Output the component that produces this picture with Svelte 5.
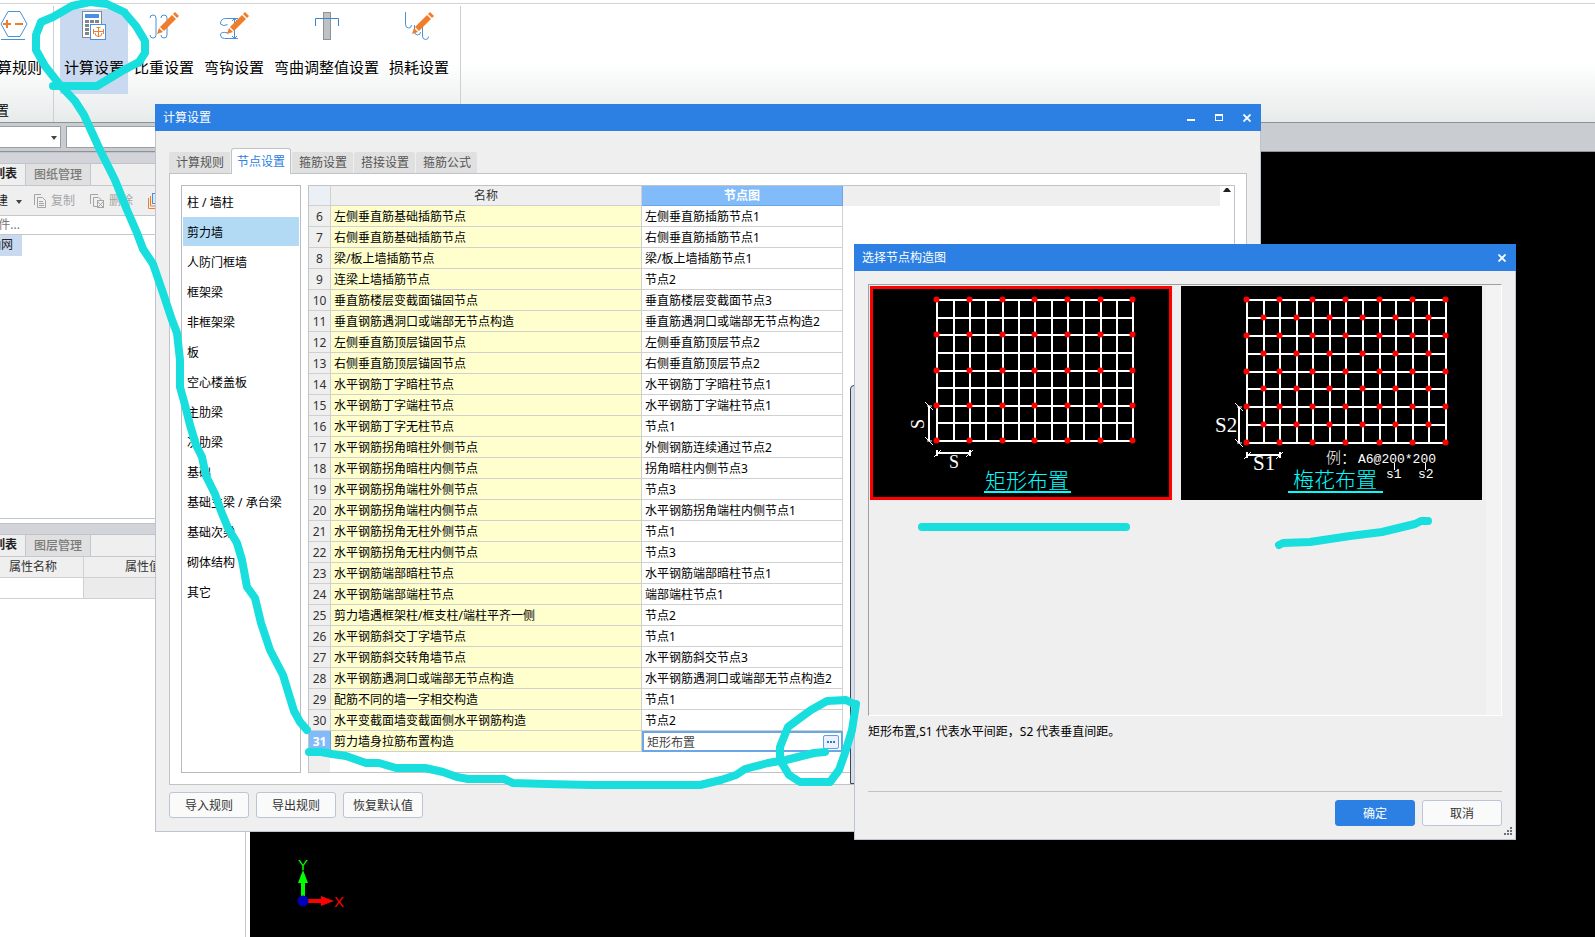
<script>
    const tools = [
        { icon: 'calc', label: '计算设置' },
        { icon: 'weight', label: '比重设置' },
        { icon: 'hook', label: '弯钩设置' },
        { icon: 'bend', label: '弯曲调整值设置' },
        { icon: 'loss', label: '损耗设置' }
    ];

    const tabs = ['计算规则', '节点设置', '箍筋设置', '搭接设置', '箍筋公式'];

    const categories = [
        '柱 / 墙柱', '剪力墙', '人防门框墙', '框架梁', '非框架梁', '板', '空心楼盖板',
        '主肋梁', '次肋梁', '基础', '基础主梁 / 承台梁', '基础次梁', '砌体结构', '其它'
    ];

    const rows = [
        ['左侧垂直筋基础插筋节点', '左侧垂直筋插筋节点1'],
        ['右侧垂直筋基础插筋节点', '右侧垂直筋插筋节点1'],
        ['梁/板上墙插筋节点', '梁/板上墙插筋节点1'],
        ['连梁上墙插筋节点', '节点2'],
        ['垂直筋楼层变截面锚固节点', '垂直筋楼层变截面节点3'],
        ['垂直钢筋遇洞口或端部无节点构造', '垂直筋遇洞口或端部无节点构造2'],
        ['左侧垂直筋顶层锚固节点', '左侧垂直筋顶层节点2'],
        ['右侧垂直筋顶层锚固节点', '右侧垂直筋顶层节点2'],
        ['水平钢筋丁字暗柱节点', '水平钢筋丁字暗柱节点1'],
        ['水平钢筋丁字端柱节点', '水平钢筋丁字端柱节点1'],
        ['水平钢筋丁字无柱节点', '节点1'],
        ['水平钢筋拐角暗柱外侧节点', '外侧钢筋连续通过节点2'],
        ['水平钢筋拐角暗柱内侧节点', '拐角暗柱内侧节点3'],
        ['水平钢筋拐角端柱外侧节点', '节点3'],
        ['水平钢筋拐角端柱内侧节点', '水平钢筋拐角端柱内侧节点1'],
        ['水平钢筋拐角无柱外侧节点', '节点1'],
        ['水平钢筋拐角无柱内侧节点', '节点3'],
        ['水平钢筋端部暗柱节点', '水平钢筋端部暗柱节点1'],
        ['水平钢筋端部端柱节点', '端部端柱节点1'],
        ['剪力墙遇框架柱/框支柱/端柱平齐一侧', '节点2'],
        ['水平钢筋斜交丁字墙节点', '节点1'],
        ['水平钢筋斜交转角墙节点', '水平钢筋斜交节点3'],
        ['水平钢筋遇洞口或端部无节点构造', '水平钢筋遇洞口或端部无节点构造2'],
        ['配筋不同的墙一字相交构造', '节点1'],
        ['水平变截面墙变截面侧水平钢筋构造', '节点2'],
        ['剪力墙身拉筋布置构造', '矩形布置']
    ];
    const firstRow = 6;
    const editRow = 31;

    // grid line positions inside the two layout diagrams
    const rectX = [67, 84, 100, 116, 133, 149, 165, 182, 198, 214, 231, 247, 263];
    const rectY = [14, 32, 49, 67, 85, 102, 120, 137, 155];
    const plumX = [66, 83, 99, 116, 132, 149, 165, 182, 199, 215, 232, 248, 265];
    const plumY = [14, 32, 50, 68, 86, 103, 121, 139, 157];

    let tab = $state('节点设置');
    let category = $state('剪力墙');
    let layout = $state('rect');
    let nodeValue = $state('矩形布置');
</script>

{#snippet pencil()}
    <g transform="translate(9 24)" fill="#f07d2b">
        <path d="M3 -6 L15 -18 L19 -14 L7 -2 Z" />
        <path d="M16 -19 L18 -21 L22 -17 L20 -15 Z" />
        <path d="M2 -5 L0 1 L6 -1 Z" />
    </g>
{/snippet}

{#snippet closeIcon()}
    <svg width="8" height="8" viewBox="0 0 8 8"><path d="M0.5 0.5 L7.5 7.5 M7.5 0.5 L0.5 7.5" stroke="#fff" stroke-width="1.8" /></svg>
{/snippet}

{#snippet mesh(xs, ys, plum)}
    {#each xs as x}
        <path d="M{x} {ys[0]} V{ys[8]}" stroke="#fff" stroke-width="2" />
    {/each}
    {#each ys as y}
        <path d="M{xs[0] - 1} {y} H{xs[12] + 1}" stroke="#fff" stroke-width="2" />
    {/each}
    {#each xs as x, i}
        {#each ys as y, j}
            {#if (i % 2 === 0 && j % 2 === 0) || (plum && i % 2 === 1 && j % 2 === 1)}
                <circle cx={x - 0.5} cy={y - 0.5} r="3" fill="#f00" />
            {/if}
        {/each}
    {/each}
    <path d="M{xs[0] - 8} {ys[6]} V{ys[8]}" stroke="#fff" stroke-width="2" />
    <path d="M{xs[0] - 12} {ys[6] - 4} l8 8 M{xs[0] - 12} {ys[8] - 4} l8 8 M{xs[0] - 10} {ys[6]} h5 M{xs[0] - 10} {ys[8]} h5" stroke="#fff" />
    <path d="M{xs[0]} {ys[8] + 12} H{xs[2]} M{xs[0]} {ys[8] + 9} v6 M{xs[2]} {ys[8] + 9} v6" stroke="#fff" stroke-width="2" />
    <path d="M{xs[0] - 3} {ys[8] + 16} l7 -7 M{xs[2] - 4} {ys[8] + 16} l7 -7" stroke="#fff" />
{/snippet}

<div class="app">
    <header class="ribbon">
        <div class="group first">
            <button class="tool cut">
                <svg width="28" height="32" viewBox="0 0 28 32" fill="none">
                    <path d="M1 15 L8 2.5 H20 L27 15 L20 27.5 H8 Z" stroke="#4a90d9" />
                    <path d="M1 30.5 H25" stroke="#4a90d9" />
                    <path d="M3 15 H11 M7 11 V19 M15 15 H23" stroke="#f07d2b" stroke-width="2" />
                </svg>
                <span>算规则</span>
            </button>
            <span class="group-name">置</span>
        </div>
        <div class="group">
            {#each tools as tool, i}
                <button class="tool" class:active={i === 0}>
                    <svg width="32" height="32" viewBox="0 0 32 32" fill="none">
                        {#if tool.icon === 'calc'}
                            <rect x="4.5" y="2.5" width="19" height="26" fill="#fff" stroke="#808a94" />
                            <rect x="7" y="5" width="14" height="4" fill="#4a90e2" />
                            <path d="M7 12.5 H21 M7 16.5 H15 M7 20.5 H11 M7 24.5 H11" stroke="#7d8790" stroke-width="3" stroke-dasharray="4 1" />
                            <rect x="12.5" y="15.5" width="15" height="15" fill="#fff" stroke="#4a90e2" />
                            <path d="M20.5 18 V28 M18.5 18.5 H22.5 M16 22.5 H25 M15.5 20 V25 M25.5 20 V25 M17 24 q0 3.500 3.500 3.500 q3.500 0 3.500 -3.500" stroke="#f07d2b" />
                        {:else if tool.icon === 'weight'}
                            <path d="M2 9 q0 -3 3 -3 q3 0 3 3 v17 q0 3 -3 3 q-3 0 -3 -3 M13 9 q0 -3 3 -3 q3 0 3 3 v17 q0 3 -3 3 q-3 0 -3 -3" stroke="#4a90d9" />
                            {@render pencil()}
                        {:else if tool.icon === 'hook'}
                            <path d="M2.500 15 q0 -5.500 5 -5.500 H20 M2.500 15 q3 3 7 0.500 M10 24 q-7.500 -2 -7.500 2 q0 3.500 4 3.500 H20 M16.500 10 v19 M14 12 l2.500 -2.500 l2.500 2.500 M14 27 l2.500 2.500 l2.500 -2.500" stroke="#4a90d9" />
                            {@render pencil()}
                        {:else if tool.icon === 'bend'}
                            <rect x="12.5" y="3.5" width="7" height="27" fill="#bfc2c5" stroke="#8d9297" />
                            <path d="M4.5 17 V9.5 H27.5 V17" stroke="#3a84d0" />
                        {:else}
                            <path d="M2.500 3 v12 q0 4 3 4 q3 0 3 -3 M11.500 16 v6 q0 4 3 4 q3 0 3 -3 M19.500 18 v9 q0 3.500 3 3.500 q3 0 3 -3" stroke="#4a90d9" />
                            {@render pencil()}
                        {/if}
                    </svg>
                    <span>{tool.label}</span>
                </button>
            {/each}
        </div>
    </header>

    <div class="filters">
        <div class="combo">
            <select aria-label="楼层"><option></option></select>
            <svg width="6" height="4" viewBox="0 0 6 4"><path d="M0 0 H6 L3 4 Z" fill="#444" /></svg>
        </div>
        <input class="filter-input" aria-label="构件" />
    </div>

    <div class="workspace">
        <aside class="sidebar">
            <section class="panel tree-panel">
                <div class="strip"></div>
                <div class="side-tabs">
                    <button class="side-tab cut on">列表</button>
                    <button class="side-tab">图纸管理</button>
                </div>
                <div class="side-tools">
                    <button class="new cut">建</button>
                    <svg class="drop" width="6" height="4" viewBox="0 0 6 4"><path d="M0 0 H6 L3 4 Z" fill="#444" /></svg>
                    <button class="copy">
                        <svg width="12" height="14" viewBox="0 0 12 14" fill="none" stroke="#a5a5a5">
                            <path d="M0.5 11 V0.5 H7" /><path d="M3.5 3.5 H8.5 L11.5 6.5 V13.5 H3.5 Z M5 7.5 H9 M5 9.5 H10 M5 11.5 H10" />
                        </svg>
                        复制
                    </button>
                    <button class="remove">
                        <svg width="14" height="14" viewBox="0 0 14 14" fill="none" stroke="#a5a5a5">
                            <path d="M0.5 10 V0.5 H8" /><path d="M7 12.5 H3.5 V3.5 H8.5 L11.5 6" /><rect x="7.5" y="6.5" width="6" height="7" /><path d="M8 8 L13 13 M13 8 L8 13" />
                        </svg>
                        删除
                    </button>
                    <svg width="14" height="16" viewBox="0 0 14 16" fill="none"><path d="M0.5 5 V15.5 H12" stroke="#f07d2b" /><path d="M2.5 3 V13 H12" stroke="#f07d2b" /><rect x="4.5" y="0.5" width="9" height="10" fill="#dbe9fa" stroke="#4a90e2" /></svg>
                </div>
                <div class="search"><span class="cut">件...</span></div>
                <div class="tree"><button class="node cut">轴网</button></div>
            </section>
            <section class="panel lower">
                <div class="strip"></div>
                <div class="side-tabs">
                    <button class="side-tab cut on">列表</button>
                    <button class="side-tab">图层管理</button>
                </div>
                <table class="props">
                    <thead><tr><th class="prop-name">属性名称</th><th class="prop-value">属性值</th><th></th></tr></thead>
                    <tbody><tr><td></td><td class="off"></td><td class="off"></td></tr></tbody>
                </table>
            </section>
        </aside>
        <main class="canvas">
            <svg width="60" height="60" viewBox="0 0 60 60">
                <path d="M13 44 V27" stroke="#0f0" stroke-width="4" />
                <path d="M8 28 L13 15 L18 28 Z" fill="#0f0" />
                <path d="M14 46 H33" stroke="#f00" stroke-width="4" />
                <path d="M31 41 L44 46 L31 51 Z" fill="#f00" />
                <circle cx="13" cy="46" r="5.5" fill="#0000b8" />
                <text x="13" y="15" class="axis" text-anchor="middle" fill="#0f0">Y</text>
                <text x="49" y="52" class="axis" text-anchor="middle" fill="#f00">X</text>
            </svg>
        </main>
    </div>

    <div class="window settings" role="dialog" aria-label="计算设置">
        <div class="titlebar">
            <span>计算设置</span>
            <div class="win-buttons">
                <button aria-label="最小化"><svg width="8" height="8" viewBox="0 0 8 8"><rect y="5" width="8" height="2" fill="#fff" /></svg></button>
                <button aria-label="最大化"><svg width="8" height="8" viewBox="0 0 8 8"><path d="M0 0 H8 V7 H0 Z M1 2 V6 H7 V2 Z" fill="#fff" fill-rule="evenodd" /></svg></button>
                <button aria-label="关闭">{@render closeIcon()}</button>
            </div>
        </div>
        <div class="settings-body">
            <div class="tabs" role="tablist">
                {#each tabs as name}
                    <button class="tab" role="tab" aria-selected={tab === name} class:current={tab === name} onclick={() => (tab = name)}>{name}</button>
                {/each}
            </div>
            <div class="pane">
                <div class="categories">
                    {#each categories as name}
                        <button class="category" class:selected={category === name} onclick={() => (category = name)}>{name}</button>
                    {/each}
                </div>
                <div class="grid-box">
                    <div class="grid-scroll">
                        <table class="grid">
                            <thead>
                                <tr>
                                    <th class="num corner"></th>
                                    <th class="name">名称</th>
                                    <th class="value chosen">节点图</th>
                                    <th class="rest"></th>
                                </tr>
                            </thead>
                            <tbody>
                                {#each rows as [name, value], i}
                                    {@const no = firstRow + i}
                                    <tr>
                                        <th class="num" class:chosen={no === editRow}>{no}</th>
                                        <td class="name">{name}</td>
                                        {#if no === editRow}
                                            <td class="value editing">
                                                <div class="editor">
                                                    <input aria-label="节点图" bind:value={nodeValue} />
                                                    <button aria-label="选择">
                                                        <svg width="14" height="12" viewBox="0 0 14 12"><path d="M3 6 h2 M6 6 h2 M9 6 h2" stroke="#3278c8" stroke-width="2" /></svg>
                                                    </button>
                                                </div>
                                            </td>
                                        {:else}
                                            <td class="value">{value}</td>
                                        {/if}
                                    </tr>
                                {/each}
                            </tbody>
                        </table>
                    </div>
                    <div class="scrollbar">
                        <svg width="8" height="4" viewBox="0 0 8 4"><path d="M0 4 H8 L5 0 H3 Z" fill="#222" /></svg>
                    </div>
                </div>
                <div class="preview"></div>
            </div>
            <div class="actions">
                <button class="btn">导入规则</button>
                <button class="btn">导出规则</button>
                <button class="btn">恢复默认值</button>
            </div>
        </div>
    </div>

    <div class="window chooser" role="dialog" aria-label="选择节点构造图">
        <div class="titlebar">
            <span>选择节点构造图</span>
            <div class="win-buttons">
                <button aria-label="关闭">{@render closeIcon()}</button>
            </div>
        </div>
        <div class="chooser-body">
            <div class="gallery">
                <button class="card" class:picked={layout === 'rect'} onclick={() => (layout = 'rect')}>
                    <svg width="302" height="214" viewBox="0 0 302 214">
                        {@render mesh(rectX, rectY, false)}
                        <text class="dim" x="84" y="182" text-anchor="middle">S</text>
                        <text class="dim" transform="translate(54 138) rotate(-90)" text-anchor="middle">S</text>
                        <text class="caption" x="115" y="202">矩形布置</text>
                        <path d="M114 206 H201" stroke="#0ff" stroke-width="2" />
                    </svg>
                </button>
                <button class="card" class:picked={layout === 'plum'} onclick={() => (layout = 'plum')}>
                    <svg width="301" height="214" viewBox="0 0 301 214">
                        {@render mesh(plumX, plumY, true)}
                        <text class="dim large" x="34" y="146">S2</text>
                        <text class="dim large" x="72" y="184">S1</text>
                        <text class="sample" x="145" y="177">例：</text>
                        <text class="note" x="177" y="177">A6@200*200</text>
                        <text class="note" x="205" y="192">s1</text>
                        <text class="note" x="237" y="192">s2</text>
                        <path d="M213.5 177 V184 M244.5 177 V184" stroke="#fff" />
                        <text class="caption" x="112" y="201">梅花布置</text>
                        <path d="M107 206 H202" stroke="#0ff" stroke-width="2" />
                    </svg>
                </button>
            </div>
            <p class="hint">矩形布置,S1 代表水平间距，S2 代表垂直间距。</p>
            <div class="chooser-actions">
                <button class="btn primary">确定</button>
                <button class="btn">取消</button>
            </div>
            <svg class="grip" width="8" height="8" viewBox="0 0 8 8"><path d="M6 1 h2 M3 4 h2 M6 4 h2 M0 7 h2 M3 7 h2 M6 7 h2" stroke="#6b6f78" stroke-width="2" /></svg>
        </div>
    </div>

    <svg class="marker" width="1595" height="937" viewBox="0 0 1595 937" aria-hidden="true">
        <path d="M53 86 H97 L122 71 L139 62 L145 53 V41 L136 26 L124 12 L107 4 L90 2 L72 6 L53 17 L41 22 L36 35 V50 L45 66 L60 85 L75 101 L84 115 L100 150 L115 180 L127 210 L137 233 L143 249 L153 264 L163 293 L172 320 L177 333 L180 360 V387 L185 405 L190 425 L196 445 L202 457 L206 476 L215 494 L221 511 L228 528 L237 543 L242 560 L247 587 L255 598 L261 623 L270 650 L283 675 L290 698 L294 711 L300 722 L307 730" />
        <path d="M309 752 H321 L332 754 L346 756 L366 763 H379 L396 768 H425 L443 772 L457 777 L468 779 H504 L513 783 L546 784 L591 785 H700 L721 780 L736 775 L745 769 L768 763 L786 760 L814 753 L825 752" />
        <path d="M856 704 L852 730 L845 753 L839 770 L830 782 H800 L789 775 L780 760 V747 L788 727 L800 718 L811 710 L827 701 L846 700 L854 704" />
        <path d="M922 527 H1126" />
        <path d="M1279 545 L1283 543 L1310 542 L1350 536 L1382 532 L1415 524 L1421 521 H1428" />
    </svg>
</div>

<style>
    :global(body) { margin: 0; overflow: hidden; }

    .app {
        position: relative;
        display: flex;
        flex-direction: column;
        height: 100vh;
        overflow: hidden;
        background: #fff;
        color: #000;
        font: 12px/20px "Noto Sans", "Noto Sans CJK SC", sans-serif;
    }
    button, input, select {
        font: inherit;
        color: inherit;
        margin: 0;
        padding: 0;
        border: 0;
        background: none;
        box-sizing: border-box;
        border-radius: 0;
        outline: 0;
    }
    button { white-space: nowrap; }
    svg { display: block; flex: none; }
    .cut { display: flex; justify-content: flex-end; overflow: hidden; }

    /* ribbon */
    .ribbon {
        display: flex;
        height: 119px;
        box-sizing: border-box;
        border-top: 1px solid #d4d4d4;
        margin-top: 3px;
        background: linear-gradient(#fff 50%, #e6ebea);
    }
    .group {
        display: flex;
        align-items: flex-start;
        gap: 2px;
        padding: 3px 7px 0 6px;
        margin: 2px 0 0;
        border-right: 1px solid #ccd0d2;
    }
    .group.first { flex-direction: column; width: 54px; box-sizing: border-box; padding: 3px 0 0; }
    .tool {
        display: flex;
        flex-direction: column;
        align-items: center;
        gap: 14px;
        height: 85px;
        padding: 0 4px;
        font-size: 15px;
        line-height: 24px;
    }
    .tool.active { background: #c9d9f0; }
    .tool.cut { width: 46px; align-items: flex-end; justify-content: flex-start; }
    .tool.cut svg { margin-right: 14px; }
    .group-name { font-size: 13px; line-height: 20px; margin: 4px 0 0 -4px; }

    .filters {
        display: flex;
        gap: 5px;
        height: 30px;
        box-sizing: border-box;
        padding: 3px 0;
        border-top: 1px solid #8d9297;
        border-bottom: 1px solid #8d9297;
        background: #c9ccd1;
    }
    .combo { position: relative; width: 61px; }
    .combo select { width: 100%; height: 22px; appearance: none; background: #fff; border: 1px solid #9b9fa3; border-left: 0; }
    .combo svg { position: absolute; right: 4px; top: 10px; }
    .filter-input { width: 180px; height: 22px; background: #fff; border: 1px solid #9b9fa3; }

    /* left side */
    .workspace { flex: 1; display: flex; min-height: 0; }
    .sidebar { display: flex; flex-direction: column; gap: 4px; width: 246px; padding-right: 4px; background: #fff; color: #333; }
    .panel { border-right: 1px solid #c4c7cc; }
    .panel.lower { flex: 1; }
    .tree-panel { height: 367px; border-bottom: 1px solid #c4c7cc; box-sizing: border-box; }
    .strip { height: 12px; box-sizing: border-box; background: #d2d4da; border: solid #c0c4ca; border-width: 1px 0; }
    .side-tabs { display: flex; height: 21px; background: #efefef; border-bottom: 1px solid #c4c7cc; }
    .side-tab { padding: 0 8px; border-right: 1px solid #c4c7cc; background: #e0e0e0; color: #7a7a7a; font-weight: 500; }
    .side-tab.on { width: 26px; background: #efefef; color: #222; font-weight: 700; }
    .side-tools { display: flex; align-items: center; height: 30px; box-sizing: border-box; background: #efefef; border-bottom: 1px solid #c4c7cc; color: #a5a5a5; }
    .side-tools .new { width: 8px; color: #222; }
    .side-tools .drop { margin: 2px 12px 0 8px; }
    .copy, .remove { display: flex; align-items: center; gap: 5px; margin-right: 15px; }
    .search { height: 19px; line-height: 18px; box-sizing: border-box; border-bottom: 1px solid #c4c7cc; color: #777; }
    .search .cut { width: 20px; }
    .node { width: 22px; height: 21px; padding-right: 9px; background: #c9d9f0; color: #222; }
    .props { width: 100%; border-collapse: collapse; table-layout: fixed; }
    .props th { height: 20px; padding: 0; font-weight: 400; background: #efefef; border: solid #d0d0d0; border-width: 0 1px 1px 0; }
    .props td { height: 20px; padding: 0; border: solid #d0d0d0; border-width: 0 1px 1px 0; }
    .props .off { background: #ebebeb; }
    .props .prop-name { width: 74px; text-align: left; padding-left: 9px; }
    .props .prop-value { width: 118px; }

    .canvas { flex: 1; display: flex; align-items: flex-end; padding: 0 0 22px 40px; background: #000; }
    .axis { font: 15px "Liberation Sans", sans-serif; }

    /* windows */
    .window {
        position: absolute;
        display: flex;
        flex-direction: column;
        background: #efefef;
        box-sizing: border-box;
    }
    .settings { left: 155px; right: 334px; top: 104px; bottom: 105px; }
    .chooser { left: 854px; right: 79px; top: 244px; bottom: 97px; }
    .titlebar { display: flex; justify-content: space-between; align-items: center; height: 27px; padding: 0 10px 0 8px; background: #2c80e3; color: #fff; }
    .win-buttons { display: flex; gap: 20px; }
    .settings-body, .chooser-body { flex: 1; display: flex; flex-direction: column; border: 1px solid #bcc4d2; border-top: 0; min-height: 0; }
    .settings-body { padding: 17px 13px 13px; }

    .tabs { display: flex; align-items: flex-end; gap: 1px; height: 26px; margin-bottom: -1px; z-index: 1; }
    .tab { height: 22px; padding: 1px 6px 0 7px; background: #e0e0e0; color: #555; border-radius: 2px 2px 0 0; border-bottom: 1px solid #c0c4c9; }
    .tab.current { height: 26px; padding: 0 5px; background: #fff; color: #2c80e3; border: 1px solid #c0c4c9; border-bottom: 0; border-radius: 3px 3px 0 0; }
    .pane { flex: 1; display: flex; gap: 7px; padding: 11px; background: #fff; border: 1px solid #c0c4c9; position: relative; min-height: 0; }
    .categories { width: 120px; box-sizing: border-box; padding: 1px; border: 1px solid #b8bcc2; }
    .category { display: block; width: 100%; height: 30px; padding: 2px 0 0 4px; text-align: left; border-bottom: 1px solid #fff; }
    .category.selected { background: #b3daf5; }

    .grid-box { flex: 1; display: flex; border: 1px solid #c0c4c9; min-width: 0; }
    .grid-scroll { flex: 1; overflow: hidden; background: linear-gradient(to right, #efefef 21px, #fff 21px); }
    .grid { width: 100%; border-collapse: separate; border-spacing: 0; table-layout: fixed; }
    .grid th, .grid td { height: 21px; box-sizing: border-box; padding: 1px 3px 0; line-height: 19px; border: solid #d0d0d0; border-width: 0 1px 1px 0; white-space: nowrap; }
    .grid th { font-weight: 400; color: #333; background: #efefef; }
    .grid thead th { height: 20px; line-height: 18px; }
    .grid .num { width: 22px; padding: 1px 0 0; }
    .grid .corner { background: #ebf0f7; }
    .grid th.name { width: 311px; }
    .grid td.name { background: #ffffce; }
    .grid th.value { width: 201px; }
    .grid .rest { border: 0; }
    .grid th.chosen { background: #82bbf9; color: #fff; font-weight: 700; border-color: #6ba6e6; }
    .grid td.editing { padding: 0; border: 0; }
    .editor { display: flex; align-items: center; height: 21px; box-sizing: border-box; border: 2px solid #6ba6e6; background: #fff; }
    .editor input { flex: 1; min-width: 0; height: 17px; padding: 1px 0 0 3px; color: #444; }
    .editor button { border: 1px solid #5fa0e6; border-radius: 2px; background: #eaf3fd; margin-right: 2px; }
    .scrollbar { width: 14px; padding: 2px 0 0 3px; box-sizing: border-box; }
    .preview { position: absolute; left: 680px; right: 10px; top: 211px; bottom: 0; background: #d6dff0; border: 1px solid #444; border-radius: 4px 0 0 0; clip-path: inset(0 calc(100% - 5px) 0 0); }

    .actions { display: flex; gap: 7px; margin-top: 7px; }
    .btn { min-width: 80px; height: 26px; padding-top: 1px; color: #333; background: #fafafa; border: 1px solid #bcc4d8; border-radius: 3px; }
    .btn.primary { background: #2c80e3; border-color: #2c80e3; color: #fff; }

    .chooser-body { padding: 13px 13px 13px; position: relative; }
    .gallery {
        display: flex;
        gap: 9px;
        align-items: flex-start;
        height: 428px;
        padding: 1px;
        border: 1px solid #fff;
        border-top-color: #a0a0a0;
        border-left-color: #a0a0a0;
        background: linear-gradient(to left, #f3f3f3 15px, #efefef 15px);
    }
    .card { background: #000; }
    .card.picked { box-shadow: inset 0 0 0 3px #f00; }
    .dim { font: 18px "Liberation Serif", serif; fill: #fff; }
    .dim.large { font-size: 21px; }
    .note { font: 13px "Liberation Mono", monospace; fill: #fff; }
    .sample { font: 300 15px "Noto Sans CJK SC", sans-serif; fill: #fff; }
    .caption { font: 300 21px "Noto Sans CJK SC", sans-serif; fill: #0ff; }
    .hint { flex: 1; margin: 6px 0 0; }
    .chooser-actions { display: flex; justify-content: flex-end; gap: 7px; padding-top: 8px; border-top: 1px solid #c0c2c6; }
    .grip { position: absolute; right: 3px; bottom: 4px; }

    .marker { position: absolute; left: 0; top: 0; pointer-events: none; }
    .marker path { fill: none; stroke: #18dedd; stroke-width: 8; stroke-linecap: round; stroke-linejoin: round; }
</style>
